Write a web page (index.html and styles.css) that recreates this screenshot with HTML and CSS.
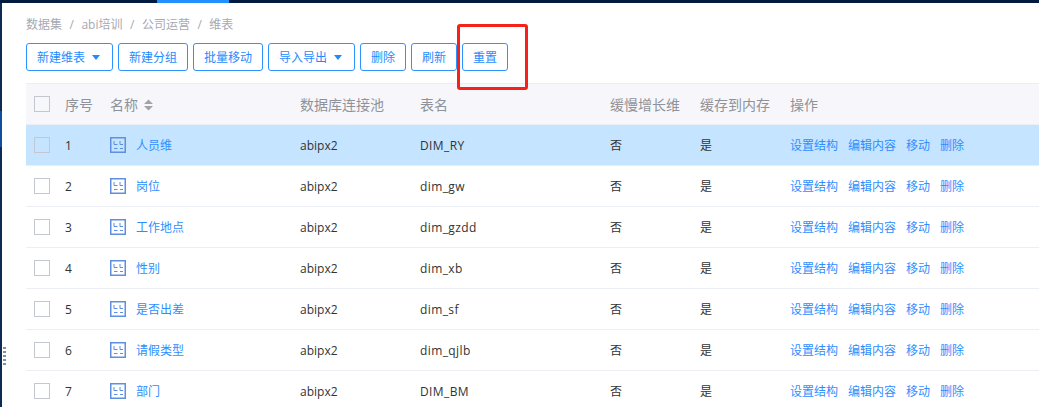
FILE: index.html
```html
<!DOCTYPE html>
<html lang="zh">
<head>
<meta charset="utf-8">
<title>维表</title>
<link rel="stylesheet" href="styles.css">
</head>
<body>
<div class="top-bar"><span class="top-active"></span></div>
<div class="shell">
  <aside class="rail"><span class="rail-blue"></span></aside>
  <main class="content">
    <nav class="crumbs">
      <span>数据集</span><i>/</i><span>abi培训</span><i>/</i><span>公司运营</span><i>/</i><span>维表</span>
    </nav>
    <div class="toolbar">
      <button class="btn">新建维表<span class="caret"></span></button>
      <button class="btn">新建分组</button>
      <button class="btn">批量移动</button>
      <button class="btn">导入导出<span class="caret"></span></button>
      <button class="btn">删除</button>
      <button class="btn">刷新</button>
      <button class="btn">重置</button>
    </div>
    <table class="grid">
      <colgroup>
        <col class="c-check"><col class="c-no"><col class="c-name"><col class="c-pool"><col class="c-table"><col class="c-slow"><col class="c-cache"><col class="c-ops">
      </colgroup>
      <thead>
        <tr>
          <th><span class="check"></span></th>
          <th>序号</th>
          <th>名称<svg class="sort" width="9" height="12" viewBox="0 0 9 12"><path d="M4.5 0.5 9 5H0z M4.5 11.5 0 7h9z" fill="#a3a3a3"/></svg></th>
          <th>数据库连接池</th>
          <th>表名</th>
          <th>缓慢增长维</th>
          <th>缓存到内存</th>
          <th>操作</th>
        </tr>
      </thead>
      <tbody>
        <tr class="selected">
          <td><span class="check"></span></td><td>1</td>
          <td><a class="name"><svg class="dim" width="16" height="16" viewBox="0 0 16 16"><use href="#dim-icon"/></svg>人员维</a></td>
          <td>abipx2</td><td class="tname">DIM_RY</td><td>否</td><td>是</td>
          <td class="ops"><a>设置结构</a><a>编辑内容</a><a>移动</a><a>删除</a></td>
        </tr>
        <tr>
          <td><span class="check"></span></td><td>2</td>
          <td><a class="name"><svg class="dim" width="16" height="16" viewBox="0 0 16 16"><use href="#dim-icon"/></svg>岗位</a></td>
          <td>abipx2</td><td class="tname">dim_gw</td><td>否</td><td>是</td>
          <td class="ops"><a>设置结构</a><a>编辑内容</a><a>移动</a><a>删除</a></td>
        </tr>
        <tr>
          <td><span class="check"></span></td><td>3</td>
          <td><a class="name"><svg class="dim" width="16" height="16" viewBox="0 0 16 16"><use href="#dim-icon"/></svg>工作地点</a></td>
          <td>abipx2</td><td class="tname">dim_gzdd</td><td>否</td><td>是</td>
          <td class="ops"><a>设置结构</a><a>编辑内容</a><a>移动</a><a>删除</a></td>
        </tr>
        <tr>
          <td><span class="check"></span></td><td>4</td>
          <td><a class="name"><svg class="dim" width="16" height="16" viewBox="0 0 16 16"><use href="#dim-icon"/></svg>性别</a></td>
          <td>abipx2</td><td class="tname">dim_xb</td><td>否</td><td>是</td>
          <td class="ops"><a>设置结构</a><a>编辑内容</a><a>移动</a><a>删除</a></td>
        </tr>
        <tr>
          <td><span class="check"></span></td><td>5</td>
          <td><a class="name"><svg class="dim" width="16" height="16" viewBox="0 0 16 16"><use href="#dim-icon"/></svg>是否出差</a></td>
          <td>abipx2</td><td class="tname">dim_sf</td><td>否</td><td>是</td>
          <td class="ops"><a>设置结构</a><a>编辑内容</a><a>移动</a><a>删除</a></td>
        </tr>
        <tr>
          <td><span class="check"></span></td><td>6</td>
          <td><a class="name"><svg class="dim" width="16" height="16" viewBox="0 0 16 16"><use href="#dim-icon"/></svg>请假类型</a></td>
          <td>abipx2</td><td class="tname">dim_qjlb</td><td>否</td><td>是</td>
          <td class="ops"><a>设置结构</a><a>编辑内容</a><a>移动</a><a>删除</a></td>
        </tr>
        <tr>
          <td><span class="check"></span></td><td>7</td>
          <td><a class="name"><svg class="dim" width="16" height="16" viewBox="0 0 16 16"><use href="#dim-icon"/></svg>部门</a></td>
          <td>abipx2</td><td class="tname">DIM_BM</td><td>否</td><td>是</td>
          <td class="ops"><a>设置结构</a><a>编辑内容</a><a>移动</a><a>删除</a></td>
        </tr>
      </tbody>
    </table>
  </main>
</div>
<div class="grip"></div>
<div class="highlight"></div>
<svg class="defs" width="0" height="0">
  <symbol id="dim-icon" viewBox="0 0 16 16">
    <rect x="0.75" y="0.75" width="14.5" height="14.5" fill="none" stroke="#5f8fe2" stroke-width="1.5"/>
    <path d="M4 4v3.5h3.5M10 4v3.5h3M4 11.5h3.5M10 11.5h3" fill="none" stroke="#5c8fe0"/>
  </symbol>
</svg>
</body>
</html>
```
FILE: styles.css
```css
* { box-sizing: border-box; }
html, body { margin: 0; height: 100%; overflow: hidden; background: #fff; }
body {
  position: relative;
  font-family: "Open Sans", "Noto Sans CJK SC", sans-serif;
  font-size: 12px;
  color: #333;
}
.top-bar { height: 3px; background: #021a40; display: flex; padding-left: 157px; }
.top-active { width: 72px; background: #2290ff; }
.shell { display: flex; height: 404px; }
.rail { width: 2px; flex: none; background: #0c2a52; padding-top: 108px; }
.rail-blue { display: block; height: 36px; background: #0f4ea0; }
.content { flex: 1; min-width: 0; padding-left: 24px; }
.crumbs {
  height: 40px;
  padding-top: 14px;
  line-height: 16px;
  color: #a5a9b2;
  display: flex;
}
.crumbs i { font-style: normal; margin: 0 7.5px; }
.toolbar { display: flex; gap: 5px; height: 28px; }
.btn {
  height: 28px;
  padding: 0 10px;
  border: 1px solid #2f93ff;
  border-radius: 3px;
  background: #fff;
  color: #1f8bff;
  font: inherit;
  display: flex;
  flex: none;
  justify-content: center;
  align-items: center;
  white-space: nowrap;
}
.caret {
  margin: 0 2px 0 7px;
  border-left: 4px solid transparent;
  border-right: 4px solid transparent;
  border-top: 5px solid #1f8bff;
}
.grid {
  margin-top: 12px;
  width: 1020px;
  table-layout: fixed;
  border-collapse: collapse;
}
.c-check { width: 39px; }
.c-no { width: 45px; }
.c-name { width: 190px; }
.c-pool { width: 120px; }
.c-table { width: 190px; }
.c-slow { width: 90px; }
.c-cache { width: 90px; }
th, td {
  height: 41px;
  padding: 0;
  text-align: left;
  font-weight: 400;
  white-space: nowrap;
  border-bottom: 1px solid #ebeef5;
  vertical-align: middle;
}
th:first-child, td:first-child { padding-left: 8px; }
thead tr { background: #f7f7fb; border-top: 1px solid #ebeef5; }
th { color: #8f9298; font-size: 14px; padding-bottom: 1px; }
th:first-child { padding-bottom: 0; }
.selected { background: #c4e4ff; }
.check {
  display: block;
  width: 16px;
  height: 16px;
  border: 1px solid #c4c7cf;
}
.sort { margin-left: 6px; vertical-align: -1px; }
.name, .ops a { color: #2f8eff; }
.name { display: flex; align-items: center; gap: 10px; }
.dim { display: block; flex: none; }
.tname { letter-spacing: .4px; }
.ops a { margin-right: 10px; }
.defs { position: absolute; }
.grip {
  position: absolute;
  left: 3px;
  top: 347px;
  width: 3px;
  height: 20px;
  background: repeating-linear-gradient(#7f8fa8 0 2px, transparent 2px 4px);
}
.highlight {
  position: absolute;
  left: 457px;
  top: 24px;
  width: 71px;
  height: 66px;
  border: 3px solid #f5221b;
  border-radius: 3px;
  pointer-events: none;
}
```
